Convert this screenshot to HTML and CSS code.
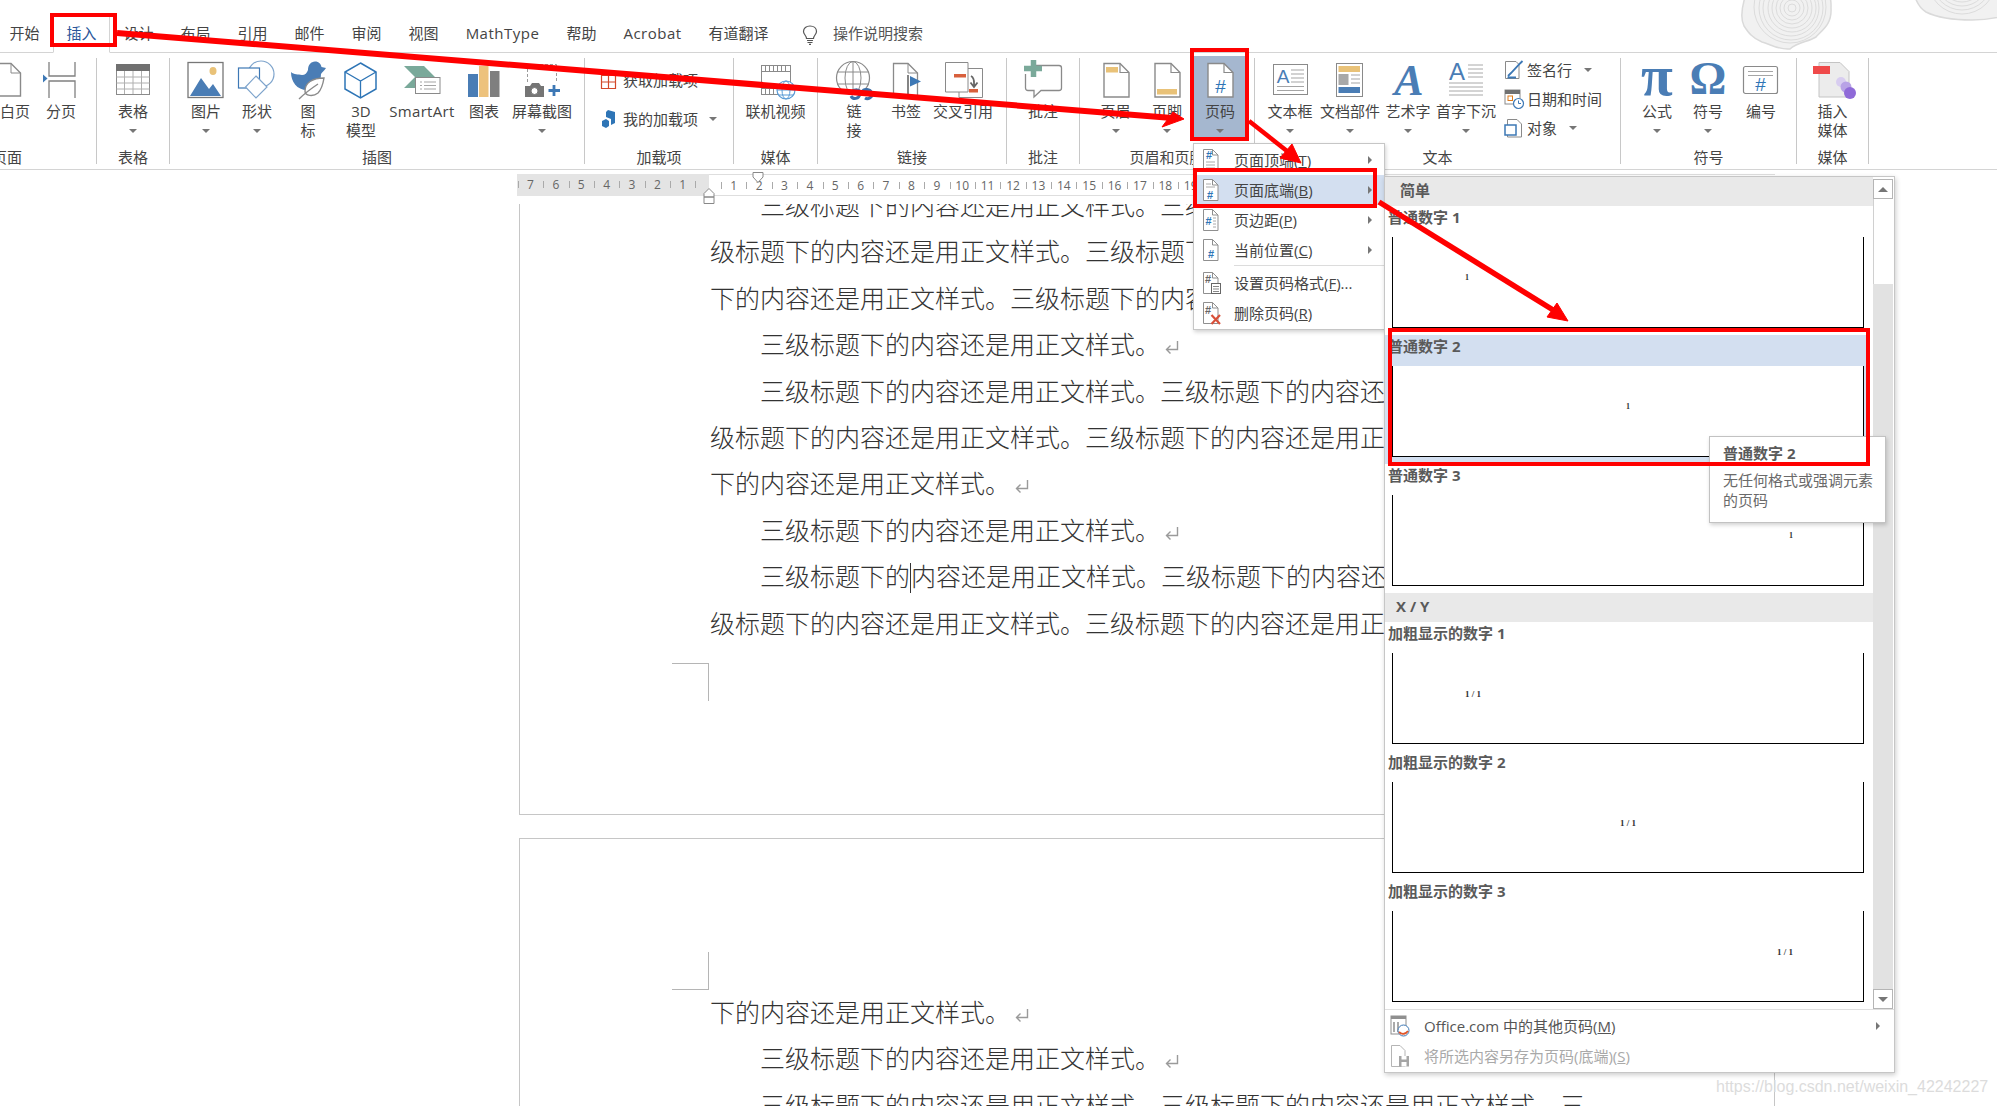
FILE: index.html
```html
<!DOCTYPE html>
<html lang="zh-CN">
<head>
<meta charset="utf-8">
<title>页码</title>
<link rel="stylesheet" href="styles.css">
</head>
<body>
<svg class="defs" width="0" height="0" aria-hidden="true">
  <defs>
    <symbol id="ret" viewBox="0 0 16 16"><path d="M13.5 2V10.5H2.5M6.5 6.5L2.5 10.5L6.5 14.5" fill="none" stroke="#9a9a9a" stroke-width="1.4"/></symbol>
    <symbol id="doc" viewBox="0 0 40 40"><path d="M8 3.500H24L33 12.500V37H8Z" fill="#fff" stroke="#8a8a8a" stroke-width="1.400"/><path d="M24 3.500V12.500H33" fill="none" stroke="#8a8a8a" stroke-width="1.200"/></symbol>
    <symbol id="mdoc" viewBox="0 0 20 24"><path d="M2.500 1.500H11.500L17 7V22.500H2.500Z" fill="#fff" stroke="#8f8f8f"/><path d="M11.500 1.500V7H17" fill="none" stroke="#8f8f8f"/></symbol>
  </defs>
</svg>

<header class="tabs">
  <span class="tab">开始</span>
  <span class="tab active">插入</span>
  <span class="tab">设计</span>
  <span class="tab">布局</span>
  <span class="tab">引用</span>
  <span class="tab">邮件</span>
  <span class="tab">审阅</span>
  <span class="tab">视图</span>
  <span class="tab tab-latin">MathType</span>
  <span class="tab">帮助</span>
  <span class="tab tab-latin">Acrobat</span>
  <span class="tab">有道翻译</span>
  <svg class="bulb" width="20" height="20" viewBox="0 0 20 20"><path d="M6.500 13.500C6.500 10.500 3.500 9.500 3.500 6.500C3.500 3.200 6.300 1 10 1C13.700 1 16.500 3.200 16.500 6.500C16.500 9.500 13.500 10.500 13.500 13.500Z" fill="none" stroke="#555" stroke-width="1.200"/><path d="M7 15.500H13M7.500 17.500H12.500M9 19.300H11" stroke="#555" stroke-width="1.200"/></svg>
  <span class="search">操作说明搜索</span>
  <svg class="rings" width="270" height="52" viewBox="0 0 270 52">
    <g fill="#f1f1f1" stroke="#dadada" stroke-width="1.500">
      <path d="M46 -40C75 -40 92 -12 91 8C92 25 82 30 76 37C68 42 58 42 50 49C38 50 30 44 22 42C12 38 8 32 4 26C0 18 2 6 6 -6C14 -30 30 -40 46 -40Z"/>
      <path d="M170 -40H270V14C258 18 246 20 232 20C214 20 198 18 186 12C176 6 170 -10 170 -40Z"/>
    </g>
    <g fill="none" stroke="#dcdcdc">
      <circle cx="52" cy="8" r="4"/><circle cx="52" cy="8" r="8"/><circle cx="52" cy="8" r="12"/><circle cx="52" cy="8" r="16"/><circle cx="52" cy="8" r="20"/><circle cx="52" cy="8" r="24"/><circle cx="51" cy="8" r="28"/><circle cx="51" cy="8" r="32"/><circle cx="50" cy="7" r="36"/>
      <circle cx="222" cy="-20" r="18"/><circle cx="222" cy="-20" r="22"/><circle cx="222" cy="-20" r="26"/><circle cx="222" cy="-20" r="30"/><circle cx="222" cy="-20" r="34"/>
    </g>
  </svg>
</header>

<section class="ribbon">
  <div class="group g0">
    <div class="btns">
      <div class="btn"><svg class="ic" viewBox="0 0 40 40"><path d="M-12 3.500H16L25.500 13V36H-12Z" fill="#fff" stroke="#8a8a8a" stroke-width="1.400"/><path d="M16 3.500V13H25.500" fill="none" stroke="#8a8a8a"/></svg><span class="lb">白页</span></div>
      <div class="btn"><svg class="ic" viewBox="0 0 40 40"><path d="M8 2V16H34V2M8 38V21H34V38" fill="none" stroke="#808080" stroke-width="1.300"/><path d="M2 14.500L6.500 18.500L2 22.500Z" fill="#3d78b5"/></svg><span class="lb">分页</span></div>
    </div>
    <div class="glabel">页面</div>
  </div>

  <div class="group g1">
    <div class="btns">
      <div class="btn"><svg class="ic" viewBox="0 0 40 40"><rect x="3.500" y="4.500" width="33" height="30" fill="#fff" stroke="#8a8a8a"/><rect x="3" y="4" width="34" height="7" fill="#707070"/><path d="M3.500 17H36.500M3.500 23H36.500M3.500 29H36.500M11.500 11V34M20 11V34M28.500 11V34" stroke="#b0b0b0"/></svg><span class="lb">表格</span><i class="caret"></i></div>
    </div>
    <div class="glabel">表格</div>
  </div>

  <div class="group g2">
    <div class="btns">
      <div class="btn"><svg class="ic" viewBox="0 0 40 40"><rect x="2" y="2.500" width="35" height="35" fill="#fff" stroke="#777" stroke-width="1.300"/><ellipse cx="27" cy="11" rx="3.500" ry="4" fill="#e9c278"/><path d="M4 36L15 18L23 29L27 24L35 36Z" fill="#4a7db5"/></svg><span class="lb">图片</span><i class="caret"></i></div>
      <div class="btn"><svg class="ic" viewBox="0 0 40 40"><circle cx="24" cy="14" r="13" fill="#fff" stroke="#7ea4cc" stroke-width="1.200"/><rect x="1.500" y="8" width="21" height="20" fill="#fff" stroke="#3d78b5" stroke-width="1.200"/><path d="M19 16L30 27L19 38L8.500 27Z" fill="#fff" stroke="#7ea4cc" stroke-width="1.200"/></svg><span class="lb">形状</span><i class="caret"></i></div>
      <div class="btn"><svg class="ic" viewBox="0 0 40 40"><path d="M3 12C6 15 10 14 14 15C17 15 19 13 20 10C20 5 23 1.500 27 1.500C31 1.500 33 4 33.500 7L38 8C36 11 34 12 33 14C33 22 28 30 19 30C9 30 3 22 3 12Z" fill="#4a7db5"/><path d="M36 18C24 18 17 23 17 31C17 36 25 37 30 33C34 29 35 24 36 18Z" fill="#fff" stroke="#8a8a8a" stroke-width="1.400"/><path d="M30 24C24 28 17 33 11 39" fill="none" stroke="#8a8a8a" stroke-width="1.400"/></svg><span class="lb">图<br>标</span></div>
      <div class="btn"><svg class="ic" viewBox="0 0 40 40"><path d="M19.500 3L35 12V29L19.500 38L4 29V12Z" fill="#fff" stroke="#2e75b6" stroke-width="1.500"/><path d="M4 12L19.500 21L35 12M19.500 21V38" fill="none" stroke="#2e75b6" stroke-width="1.300"/></svg><span class="lb">3D<br>模型</span></div>
      <div class="btn"><svg class="ic" viewBox="0 0 40 40"><path d="M2 6H22L33 17L22 28H2L13 17Z" fill="#7aa99a"/><rect x="13.500" y="17.500" width="24.500" height="16" fill="#fff" stroke="#8a8a8a"/><path d="M18 22H20M18 25.500H20M18 29H20M22 22H34M22 25.500H34M22 29H34" stroke="#a5a5a5"/></svg><span class="lb lb-latin">SmartArt</span></div>
      <div class="btn"><svg class="ic" viewBox="0 0 40 40"><rect x="4" y="14" width="10" height="23" fill="#4a7db5"/><rect x="15" y="6" width="9.500" height="31" fill="#edc27c"/><rect x="26" y="11" width="9.500" height="26" fill="#7f7f7f"/></svg><span class="lb">图表</span></div>
      <div class="btn"><svg class="ic" viewBox="0 0 40 40"><path d="M5.500 22V4.500H34.500V22" fill="none" stroke="#9a9a9a" stroke-dasharray="3 2"/><path d="M3 26H8L10 23H17L19 26H22V37H3Z" fill="#757575"/><circle cx="12.500" cy="31" r="3.500" fill="#fff" stroke="#757575"/><path d="M32 25V36M26.500 30.500H38" stroke="#3d78b5" stroke-width="2.800"/></svg><span class="lb">屏幕截图</span><i class="caret"></i></div>
    </div>
    <div class="glabel">插图</div>
  </div>

  <div class="group g3">
    <div class="rows">
      <div class="sbtn"><svg class="sic" viewBox="0 0 20 20"><path d="M1.500 5.500H15.500V18.500H1.500ZM1.500 12H15.500M8.500 1V18.500" fill="none" stroke="#d2492a" stroke-width="1.200"/></svg><span>获取加载项</span></div>
      <div class="sbtn"><svg class="sic" viewBox="0 0 20 20"><path d="M8 1L15 3V14L11 16V10L6 8V3Z" fill="#2e75b6"/><path d="M2 12L6 10L9 12V17L6 19L2 17Z" fill="#2e75b6"/></svg><span>我的加载项</span><i class="caret caret-gm"></i></div>
    </div>
    <div class="glabel">加载项</div>
  </div>

  <div class="group g4">
    <div class="btns">
      <div class="btn"><svg class="ic" viewBox="0 0 40 40"><rect x="5.500" y="5.500" width="29" height="29" fill="#fff" stroke="#8a8a8a"/><rect x="5.500" y="5.500" width="29" height="6" fill="#fff" stroke="#8a8a8a"/><rect x="5.500" y="28.500" width="29" height="6" fill="#fff" stroke="#8a8a8a"/><path d="M9.500 5.500V11.500M13.500 5.500V11.500M17.500 5.500V11.500M21.500 5.500V11.500M25.500 5.500V11.500M29.500 5.500V11.500M9.500 28.500V34.500M13.500 28.500V34.500M17.500 28.500V34.500" stroke="#8a8a8a"/><circle cx="30" cy="30" r="9" fill="#fff" stroke="#5b9bd5" stroke-width="1.200"/><ellipse cx="30" cy="30" rx="4" ry="9" fill="none" stroke="#5b9bd5"/><path d="M21 30H39M22.500 25H37.500M22.500 35H37.500" stroke="#5b9bd5"/></svg><span class="lb">联机视频</span></div>
    </div>
    <div class="glabel">媒体</div>
  </div>

  <div class="group g5">
    <div class="btns">
      <div class="btn"><svg class="ic" viewBox="0 0 40 40"><circle cx="19" cy="18" r="16.500" fill="#fff" stroke="#8a8a8a" stroke-width="1.200"/><ellipse cx="19" cy="18" rx="8" ry="16.500" fill="none" stroke="#8a8a8a"/><path d="M3 12H35M3 24H35M19 1.500V34.500" stroke="#8a8a8a"/><path d="M17 33C19 29 24 29 27 32C29 35 31 34 32 32M28 32C30 28 36 29 38 33C39 37 34 40 31 38M26 34C25 39 19 40 17 36" fill="none" stroke="#3d6fa8" stroke-width="3"/></svg><span class="lb">链<br>接</span></div>
      <div class="btn"><svg class="ic" viewBox="0 0 40 40"><path d="M7.500 3.500H22L31.500 13V37H7.500Z" fill="#fff" stroke="#8a8a8a" stroke-width="1.300"/><path d="M22 3.500V13H31.500" fill="none" stroke="#8a8a8a"/><path d="M22 15V34" stroke="#666" stroke-width="1.600"/><path d="M24 16L35 21.500L24 26.500Z" fill="#3d78b5"/></svg><span class="lb">书签</span></div>
      <div class="btn"><svg class="ic" viewBox="0 0 40 40"><path d="M16 8.500H39.500V37.500H16Z" fill="#fff" stroke="#8a8a8a"/><path d="M2.500 2.500H25V32H2.500Z" fill="#fff" stroke="#8a8a8a"/><rect x="11" y="14" width="12" height="3.500" fill="#d8603d"/><rect x="26" y="29" width="9" height="3.500" fill="#d8603d"/><path d="M28 16C32 18 31 22 31 26M27.500 22.500L31 27L34.500 22.500" fill="none" stroke="#666" stroke-width="1.800"/></svg><span class="lb">交叉引用</span></div>
    </div>
    <div class="glabel">链接</div>
  </div>

  <div class="group g6">
    <div class="btns">
      <div class="btn"><svg class="ic" viewBox="0 0 40 40"><path d="M8 5.500H36C37.500 5.500 38.500 6.500 38.500 8V28C38.500 29.500 37.500 30.500 36 30.500H18L11 37V30.500H5C3.500 30.500 2.500 29.500 2.500 28V14" fill="#fff" stroke="#8a8a8a" stroke-width="1.300"/><path d="M10.500 0V17M1 8.500H19" stroke="#7aa99a" stroke-width="5.500"/></svg><span class="lb">批注</span></div>
    </div>
    <div class="glabel">批注</div>
  </div>

  <div class="group g7">
    <div class="btns">
      <div class="btn"><svg class="ic" viewBox="0 0 40 40"><use href="#doc"/><rect x="10" y="7" width="12" height="5.500" fill="#e9c278"/></svg><span class="lb">页眉</span><i class="caret"></i></div>
      <div class="btn"><svg class="ic" viewBox="0 0 40 40"><use href="#doc"/><rect x="10" y="29" width="20" height="5.500" fill="#e9c278"/></svg><span class="lb">页脚</span><i class="caret"></i></div>
      <div class="btn on"><svg class="ic" viewBox="0 0 40 40"><use href="#doc"/><text x="20.500" y="33" class="hash big">#</text></svg><span class="lb">页码</span><i class="caret"></i></div>
    </div>
    <div class="glabel">页眉和页脚</div>
  </div>

  <div class="group g8">
    <div class="btns">
      <div class="btn"><svg class="ic" viewBox="0 0 40 40"><rect x="3.500" y="4.500" width="34" height="30" fill="#fff" stroke="#8a8a8a"/><text x="13" y="23" class="letter" font-size="19">A</text><path d="M21 10H34M21 14H34M21 18H34M21 22H34M7 26.500H34M7 30.500H34" stroke="#a5a5a5"/></svg><span class="lb">文本框</span><i class="caret"></i></div>
      <div class="btn"><svg class="ic" viewBox="0 0 40 40"><rect x="6.500" y="3.500" width="26" height="33" fill="#fff" stroke="#8a8a8a"/><rect x="8.500" y="6" width="21.500" height="6" fill="#e9c278"/><rect x="8.500" y="14" width="10" height="11" fill="#a8a8a8"/><path d="M21 15H30M21 19H30M21 23H30" stroke="#a5a5a5"/><rect x="8.500" y="27" width="21.500" height="6" fill="#4a7db5"/></svg><span class="lb">文档部件</span><i class="caret"></i></div>
      <div class="btn"><svg class="ic" viewBox="0 0 40 40"><text x="21" y="35" class="letter ital" font-size="44">A</text></svg><span class="lb">艺术字</span><i class="caret"></i></div>
      <div class="btn"><svg class="ic" viewBox="0 0 40 40"><text x="11" y="20" class="letter" font-size="24">A</text><path d="M22 5H37M22 9H37M22 13H37M22 17H37M3 23H37M3 27H37M3 31H37M3 35H37" stroke="#a8a8a8"/></svg><span class="lb">首字下沉</span><i class="caret"></i></div>
      <div class="rows rows3">
        <div class="sbtn"><svg class="sic" viewBox="0 0 20 20"><path d="M1.500 1.500H12L15 4.500V18.500H1.500Z" fill="#fff" stroke="#8a8a8a"/><path d="M4 16L7 13L16 3.500L18.500 1M3.500 17.500H12" fill="none" stroke="#3d78b5" stroke-width="1.800"/></svg><span>签名行</span><i class="caret caret-sig"></i></div>
        <div class="sbtn"><svg class="sic" viewBox="0 0 20 20"><rect x="1" y="1" width="15" height="14" fill="#fff" stroke="#8a8a8a"/><rect x="1" y="1" width="15" height="4" fill="#707070"/><rect x="4" y="7" width="4.500" height="4.500" fill="#fff" stroke="#e07b1a"/><circle cx="14.500" cy="14.500" r="5" fill="#fff" stroke="#3d78b5" stroke-width="1.200"/><path d="M14.500 11.500V14.500H17" fill="none" stroke="#3d78b5"/></svg><span>日期和时间</span></div>
        <div class="sbtn"><svg class="sic" viewBox="0 0 20 20"><path d="M3.500 1.500H13L17.500 6V19H3.500Z" fill="#fff" stroke="#8a8a8a"/><rect x="1" y="7" width="11" height="10" fill="#fff" stroke="#3d78b5" stroke-width="1.500"/></svg><span>对象</span><i class="caret caret-obj"></i></div>
      </div>
    </div>
    <div class="glabel">文本</div>
  </div>

  <div class="group g9">
    <div class="btns">
      <div class="btn"><svg class="ic" viewBox="0 0 40 40"><text x="20" y="35" class="letter serif" font-size="58">π</text></svg><span class="lb">公式</span><i class="caret"></i></div>
      <div class="btn"><svg class="ic" viewBox="0 0 40 40"><text x="20" y="34" class="letter serif" font-size="46">Ω</text></svg><span class="lb">符号</span><i class="caret"></i></div>
      <div class="btn"><svg class="ic" viewBox="0 0 40 40"><rect x="2.500" y="6.500" width="34" height="27" rx="2" fill="#fff" stroke="#8a8a8a" stroke-width="1.200"/><path d="M7 11.500H32M7 15.500H32" stroke="#a5a5a5"/><text x="19.500" y="31" class="hash big">#</text></svg><span class="lb">编号</span></div>
    </div>
    <div class="glabel">符号</div>
  </div>

  <div class="group g10">
    <div class="btns">
      <div class="btn"><svg class="ic" viewBox="0 0 40 40"><path d="M6 2.500H27L36 11.500V37H6Z" fill="#ececec" stroke="#c4c4c4"/><rect x="0" y="6" width="17" height="8" fill="#ef4a4a"/><circle cx="28" cy="22" r="5" fill="#d8cdf0"/><circle cx="33" cy="27" r="5.500" fill="#b8a2e6"/><circle cx="37" cy="33" r="6" fill="#8f6ad8"/></svg><span class="lb">插入<br>媒体</span></div>
    </div>
    <div class="glabel">媒体</div>
  </div>
</section>

<div class="ruler">
  <div class="rl-left">
    <span class="rn">7</span><span class="rn">6</span><span class="rn">5</span><span class="rn">4</span><span class="rn">3</span><span class="rn">2</span><span class="rn">1</span>
  </div>
  <div class="rl-right">
    <span class="rn">1</span><span class="rn">2</span><span class="rn">3</span><span class="rn">4</span><span class="rn">5</span><span class="rn">6</span><span class="rn">7</span><span class="rn">8</span><span class="rn">9</span><span class="rn">10</span><span class="rn">11</span><span class="rn">12</span><span class="rn">13</span><span class="rn">14</span><span class="rn">15</span><span class="rn">16</span><span class="rn">17</span><span class="rn">18</span><span class="rn">19</span>
  </div>
  <svg class="mark-top" width="12" height="11" viewBox="0 0 12 11"><path d="M1 .500H11V5L6 10.500L1 5Z" fill="#fff" stroke="#888"/></svg>
  <svg class="mark-bottom" width="12" height="16" viewBox="0 0 12 16"><path d="M6 .500L11 5.500V9H1V5.500ZM1 9H11V15.500H1Z" fill="#fff" stroke="#888"/></svg>
</div>

<main class="doc">
  <article class="sheet sheet-a">
    <div class="ln ln-first ind">三级标题下的内容还是用正文样式。三级标题下的内容还是用正文样式。三</div>
    <div class="ln">级标题下的内容还是用正文样式。三级标题下的内容还是用正文样式。三级标题</div>
    <div class="ln">下的内容还是用正文样式。三级标题下的内容还是用正文样式。</div>
    <div class="ln ind">三级标题下的内容还是用正文样式。<svg class="ret"><use href="#ret"/></svg></div>
    <div class="ln ind">三级标题下的内容还是用正文样式。三级标题下的内容还是用正文样式。三</div>
    <div class="ln">级标题下的内容还是用正文样式。三级标题下的内容还是用正文样式。三级标题</div>
    <div class="ln">下的内容还是用正文样式。<svg class="ret"><use href="#ret"/></svg></div>
    <div class="ln ind">三级标题下的内容还是用正文样式。<svg class="ret"><use href="#ret"/></svg></div>
    <div class="ln ind">三级标题下的<span class="cursor"></span>内容还是用正文样式。三级标题下的内容还是用正文样式。三</div>
    <div class="ln">级标题下的内容还是用正文样式。三级标题下的内容还是用正文样式。三级标题</div>
    <div class="crop crop-a"></div>
  </article>
  <article class="sheet sheet-b">
    <div class="crop crop-b"></div>
    <div class="ln">下的内容还是用正文样式。<svg class="ret"><use href="#ret"/></svg></div>
    <div class="ln ind">三级标题下的内容还是用正文样式。<svg class="ret"><use href="#ret"/></svg></div>
    <div class="ln ind">三级标题下的内容还是用正文样式。三级标题下的内容还是用正文样式。三</div>
  </article>
</main>

<nav class="menu">
  <div class="mi"><svg class="mic" viewBox="0 0 20 24"><use href="#mdoc"/><text x="8" y="11" class="hash">#</text><path d="M5 14H14M5 17H14M5 20H14" stroke="#aaa"/></svg><span>页面顶端(<u>T</u>)</span><i class="arr"></i></div>
  <div class="mi mi-on"><svg class="mic" viewBox="0 0 20 24"><use href="#mdoc"/><path d="M5 6H10M5 9H14" stroke="#aaa"/><text x="9" y="21" class="hash">#</text></svg><span>页面底端(<u>B</u>)</span><i class="arr"></i></div>
  <div class="mi"><svg class="mic" viewBox="0 0 20 24"><use href="#mdoc"/><text x="7.500" y="17" class="hash">#</text><path d="M12 10H15M12 13H15M12 16H15M12 19H15" stroke="#aaa"/></svg><span>页边距(<u>P</u>)</span><i class="arr"></i></div>
  <div class="mi"><svg class="mic" viewBox="0 0 20 24"><use href="#mdoc"/><text x="10" y="20" class="hash">#</text></svg><span>当前位置(<u>C</u>)</span><i class="arr"></i></div>
  <div class="msep"></div>
  <div class="mi"><svg class="mic" viewBox="0 0 20 24"><use href="#mdoc"/><text x="7" y="12" class="hash hash-gray">#</text><rect x="10.500" y="12.500" width="9" height="10" fill="#fff" stroke="#666"/><path d="M12 15.500H18M12 18H18M12 20.500H18" stroke="#888"/></svg><span>设置页码格式(<u>F</u>)...</span></div>
  <div class="mi"><svg class="mic" viewBox="0 0 20 24"><use href="#mdoc"/><text x="7" y="13" class="hash hash-gray">#</text><path d="M10.500 14L19 23M19 14L10.500 23" stroke="#d8503a" stroke-width="2.200"/></svg><span>删除页码(<u>R</u>)</span></div>
</nav>

<aside class="gallery">
  <div class="gal-top">
    <div class="gal-list">
      <div class="sec">简单</div>
      <div class="item"><div class="it-lb">普通数字 1</div><div class="pv pv-l">1</div></div>
      <div class="item item-on"><div class="it-lb">普通数字 2</div><div class="pv pv-c">1</div></div>
      <div class="item"><div class="it-lb">普通数字 3</div><div class="pv pv-r">1</div></div>
      <div class="sec sec-xy">X / Y</div>
      <div class="item"><div class="it-lb">加粗显示的数字 1</div><div class="pv pv-l pv-b">1 / 1</div></div>
      <div class="item"><div class="it-lb">加粗显示的数字 2</div><div class="pv pv-c pv-b">1 / 1</div></div>
      <div class="item"><div class="it-lb">加粗显示的数字 3</div><div class="pv pv-r pv-b">1 / 1</div></div>
    </div>
    <div class="scroll">
      <div class="sb sb-up"><i class="tri-up"></i></div>
      <div class="thumb"></div>
      <div class="track"></div>
      <div class="sb"><i class="tri-down"></i></div>
    </div>
  </div>
  <div class="gal-foot">
    <div class="fi"><svg class="fic" viewBox="0 0 20 24"><rect x="1" y="2" width="15" height="18" fill="#fff" stroke="#8f8f8f"/><rect x="1" y="2" width="15" height="3" fill="#8f8f8f"/><path d="M4 8V18M8 8V18" stroke="#aaa" stroke-width="2"/><circle cx="13.500" cy="16.500" r="5.500" fill="#fff" stroke="#3d78b5"/><path d="M9 18C12 21 16 20 18 17" fill="none" stroke="#e0562a" stroke-width="1.800"/></svg><span class="fi-dark">Office.com 中的其他页码(<u>M</u>)</span><i class="arr arr-foot"></i></div>
    <div class="fi"><svg class="fic" viewBox="0 0 20 24"><path d="M1.500 1.500H10L15 6.500V22.500H1.500Z" fill="#fff" stroke="#b5b5b5"/><rect x="9" y="12" width="10" height="10.500" fill="#a5a5a5"/><rect x="11.500" y="12" width="5" height="3.500" fill="#fff"/><rect x="11.500" y="18" width="5" height="4.500" fill="#fff"/></svg><span class="fi-dim">将所选内容另存为页码(底端)(<u>S</u>)</span></div>
  </div>
</aside>

<div class="tip">
  <div class="tip-t">普通数字 2</div>
  <div class="tip-d">无任何格式或强调元素的页码</div>
</div>

<svg class="arrows" width="1997" height="1106" viewBox="0 0 1997 1106">
  <g stroke="#f00" fill="#f00">
    <path d="M117 33L1172 118" stroke-width="6" fill="none"/>
    <path d="M1184 119L1162 127L1173 112Z" stroke-width="1"/>
    <path d="M1249 121L1292 155" stroke-width="4.500" fill="none"/>
    <path d="M1301 163L1280 158L1292 144Z" stroke-width="1"/>
    <path d="M1379 202L1558 313" stroke-width="5.500" fill="none"/>
    <path d="M1568 321L1547 317L1557 303Z" stroke-width="1"/>
  </g>
</svg>
<div class="rbox rbox-tab"></div>
<div class="rbox rbox-num"></div>
<div class="rbox rbox-bottom"></div>
<div class="rbox rbox-item"></div>

<div class="wm">https://blog.csdn.net/weixin_42242227</div>
</body>
</html>
```
FILE: styles.css
```css
* { box-sizing: border-box; }
html, body { margin: 0; padding: 0; }
body {
  width: 1997px;
  height: 1106px;
  overflow: hidden;
  position: relative;
  background: #fff;
  font-family: "Open Sans", "Noto Sans CJK SC", sans-serif;
  font-size: 15px;
  color: #444;
}
.defs { position: absolute; }

/* tabs */
.tabs {
  height: 53px;
  padding: 13px 0 0 0;
  margin-left: -4px;
  display: flex;
  align-items: flex-start;
  border-bottom: 1px solid #d4d4d4;
  position: relative;
}
.tab {
  padding: 0 13.5px;
  line-height: 40px;
  height: 40px;
  white-space: nowrap;
  color: #444;
}
.tab-latin { letter-spacing: .5px; }
.tab.active {
  color: #2b579a;
  border: 1px solid #d4d4d4;
  border-bottom: 1px solid #fff;
  padding: 0 12.5px;
  line-height: 38px;
}
.bulb { margin: 12px 0 0 18px; }
.search { margin-left: 13px; line-height: 40px; color: #555; }
.rings { position: absolute; left: 1744px; top: 0; }

/* ribbon */
.ribbon {
  height: 117px;
  padding-top: 5px;
  border-bottom: 1px solid #d4d4d4;
  display: grid;
  grid-template-columns: 97px 73px 415px 149px 84px 189px 73px 175px 366px 176px 72px;
}
.group {
  height: 106px;
  border-right: 1px solid #c8c8c8;
  display: flex;
  flex-direction: column;
}
.btns { display: grid; height: 88px; }
.g0 .btns { grid-template-columns: 30px 62px; }
.g2 .btns { grid-template-columns: 52px 50px 52px 54px 68px 56px 60px; padding-left: 10px; }
.g5 .btns { grid-template-columns: 56px 48px 66px; padding-left: 8px; }
.g7 .btns { grid-template-columns: 51px 52px 54px; padding-left: 10px; }
.g8 .btns { grid-template-columns: 56px 64px 52px 64px 122px; padding-left: 7px; }
.g9 .btns { grid-template-columns: 50px 52px 54px; padding-left: 11px; }
.btn {
  display: flex;
  flex-direction: column;
  align-items: center;
  padding-top: 2px;
  min-width: 0;
  color: #444;
}
.btn.on {
  background: #a5b7cf;
  margin-top: -2px;
  padding-top: 4px;
  height: 84px;
}
.ic { width: 40px; height: 40px; flex: none; overflow: visible; }
.lb {
  margin-top: 2px;
  line-height: 19px;
  text-align: center;
  white-space: nowrap;
}
.lb-latin { letter-spacing: .3px; }
.caret {
  display: block;
  margin-top: 8px;
  width: 0;
  height: 0;
  border-left: 4px solid transparent;
  border-right: 4px solid transparent;
  border-top: 4px solid #767676;
}
.glabel {
  height: 18px;
  line-height: 22px;
  text-align: center;
  color: #444;
  white-space: nowrap;
}
.g0 .glabel { text-align: left; margin-left: -8px; }

.rows { display: flex; flex-direction: column; gap: 20px; height: 88px; padding: 12px 0 0 15px; }
.rows3 { gap: 0; padding: 0 0 0 6px; margin-top: -3px; }
.sbtn { display: flex; align-items: center; height: 19px; white-space: nowrap; }
.rows3 .sbtn { height: 29px; }
.sic { width: 20px; height: 20px; flex: none; margin-right: 3px; overflow: visible; }
.caret-gm { margin: 1px 0 0 11px; }
.caret-sig { margin: 0 0 0 12px; }
.caret-obj { margin: 0 0 0 12px; }

/* svg text */
.hash { font: 700 11px "Liberation Sans", sans-serif; fill: #2e75b6; text-anchor: middle; }
.hash.big { font-size: 19px; font-weight: 400; }
.hash-gray { fill: #666; }
.letter { font-family: "Liberation Sans", sans-serif; fill: #4a7db5; text-anchor: middle; }
.letter.ital { font-family: "Liberation Serif", serif; font-style: italic; font-weight: 700; }
.letter.serif { font-family: "Liberation Serif", serif; font-weight: 700; }

/* ruler */
.ruler {
  margin: 4px 0 8px 517px;
  width: 1258px;
  height: 22px;
  display: flex;
  position: relative;
  border-top: 1px solid #dedede;
  border-bottom: 1px solid #dedede;
  font-size: 12px;
  color: #666;
}
.rl-left {
  width: 192px;
  background: #e4e4e4;
  display: flex;
  justify-content: flex-end;
  padding-right: 13.5px;
  margin: -1px 0;
}
.rl-right { display: flex; padding-left: 12px; }
.rn {
  width: 25.400px;
  text-align: center;
  line-height: 21px;
  position: relative;
}
.rn::before {
  content: "";
  position: absolute;
  left: 0;
  top: 7px;
  height: 7px;
  width: 1px;
  background: #aaa;
}
.rl-left .rn:last-child::after {
  content: "";
  position: absolute;
  right: 0;
  top: 7px;
  height: 7px;
  width: 1px;
  background: #aaa;
}
.mark-top { position: absolute; left: 235px; top: -3px; }
.mark-bottom { position: absolute; left: 186px; top: 13px; }

/* document */
.doc {
  height: 902px;
  overflow: hidden;
  color: #333;
  font-size: 25px;
  font-weight: 300;
}
.sheet {
  margin-left: 519px;
  width: 1256px;
  padding-left: 190px;
  border: 1px solid #c6c6c6;
  overflow: hidden;
}
.sheet-a { height: 611px; border-top: 0; }
.sheet-b { margin-top: 23px; height: 300px; border-bottom: 0; padding-top: 113px; }
.ln {
  height: 46.400px;
  line-height: 46.400px;
  white-space: nowrap;
}
.ln-first { margin-top: -22px; }
.ind { padding-left: 50px; }
.ret { width: 16px; height: 16px; margin-left: 4px; vertical-align: -1px; }
.cursor {
  display: inline-block;
  width: 0;
  height: 30px;
  border-left: 1px solid #333;
  vertical-align: -7px;
}
.crop { width: 37px; height: 38px; margin-left: -38px; border-right: 1px solid #b5b5b5; }
.crop-a { margin-top: 17px; border-top: 1px solid #b5b5b5; }
.crop-b { border-bottom: 1px solid #b5b5b5; margin-bottom: -1px; }

/* page-number menu */
.menu {
  position: absolute;
  left: 1193px;
  top: 143px;
  width: 192px;
  height: 187px;
  background: #fff;
  border: 1px solid #c6c6c6;
  padding-top: 1px;
  box-shadow: 1px 2px 4px rgba(0, 0, 0, .18);
}
.mi {
  display: flex;
  align-items: center;
  height: 30px;
  padding-left: 7px;
  white-space: nowrap;
}
.mi span { margin-bottom: 2px; }
.mi-on { background: #d3dff0; }
.mic { width: 20px; height: 24px; flex: none; margin-right: 13px; overflow: visible; }
.arr {
  margin-left: auto;
  margin-right: 12px;
  width: 0;
  height: 0;
  border-top: 4.500px solid transparent;
  border-bottom: 4.500px solid transparent;
  border-left: 4.500px solid #767676;
}
.msep { height: 3px; margin-left: 40px; border-top: 1px solid #dcdcdc; }

/* gallery */
.gallery {
  position: absolute;
  left: 1384px;
  top: 176px;
  width: 511px;
  height: 897px;
  background: #fff;
  border: 1px solid #c6c6c6;
  box-shadow: 1px 2px 5px rgba(0, 0, 0, .2);
}
.gal-top { display: flex; height: 832px; }
.gal-list { width: 488px; }
.sec {
  height: 29px;
  line-height: 27px;
  padding-left: 15px;
  background: #e9e9e9;
  font-weight: 700;
  color: #5a5a5a;
}
.sec-xy { padding-left: 11px; }
.item { height: 129px; margin-right: 6px; }
.item-on { background: #d3dff0; }
.it-lb {
  height: 22px;
  line-height: 22px;
  padding-left: 3px;
  font-weight: 700;
  color: #5a5a5a;
  white-space: nowrap;
}
.pv {
  margin: 9px 0 0 7px;
  width: 472px;
  height: 91px;
  background: #fff;
  border: 1.500px solid #000;
  border-top: 0;
  display: flex;
  align-items: center;
  padding-bottom: 8px;
  font: 700 8px/1 "Liberation Serif", serif;
  color: #333;
}
.pv-l { padding-left: 72px; }
.pv-c { justify-content: center; }
.pv-r { justify-content: flex-end; padding-right: 70px; }
.pv-b { font-size: 9px; }
.scroll { width: 20px; display: flex; flex-direction: column; padding-top: 2px; }
.sb {
  height: 20px;
  flex: none;
  background: #fff;
  border: 1px solid #b5b5b5;
  display: flex;
  align-items: center;
  justify-content: center;
}
.thumb { height: 85px; flex: none; background: #fff; border-left: 1px solid #d0d0d0; }
.track { flex: 1; background: #e2e2e2; }
.tri-up, .tri-down {
  width: 0;
  height: 0;
  border-left: 5px solid transparent;
  border-right: 5px solid transparent;
}
.tri-up { border-bottom: 5px solid #767676; }
.tri-down { border-top: 5px solid #767676; }
.gal-foot { border-top: 1px solid #e0e0e0; padding-top: 1px; }
.fi {
  display: flex;
  align-items: center;
  height: 30px;
  padding-left: 5px;
  white-space: nowrap;
}
.fi span { margin-bottom: 2px; }
.fic { width: 20px; height: 24px; flex: none; margin-right: 14px; overflow: visible; }
.fi-dark { color: #555; }
.fi-dim { color: #a9a9a9; }
.arr-foot { margin-right: 14px; }

/* tooltip */
.tip {
  position: absolute;
  left: 1709px;
  top: 436px;
  width: 177px;
  height: 87px;
  padding: 5px 8px 0 13px;
  background: #fff;
  border: 1px solid #c2c2c2;
  box-shadow: 1px 2px 4px rgba(0, 0, 0, .18);
}
.tip-t { height: 22px; line-height: 22px; font-weight: 700; color: #5a5a5a; }
.tip-d { margin-top: 6px; line-height: 20px; color: #6a6a6a; }

/* annotations */
.arrows { position: absolute; left: 0; top: 0; pointer-events: none; }
.rbox { position: absolute; border: 4px solid #f00; }
.rbox-tab { left: 50px; top: 13px; width: 67px; height: 34px; }
.rbox-num { left: 1190px; top: 48px; width: 59px; height: 93px; }
.rbox-bottom { left: 1193px; top: 168px; width: 184px; height: 40px; }
.rbox-item { left: 1388px; top: 328px; width: 482px; height: 138px; }

.wm {
  position: absolute;
  left: 1716px;
  top: 1075px;
  font: 16px/24px "Liberation Sans", sans-serif;
  color: #dcdcdc;
  white-space: nowrap;
}
```
